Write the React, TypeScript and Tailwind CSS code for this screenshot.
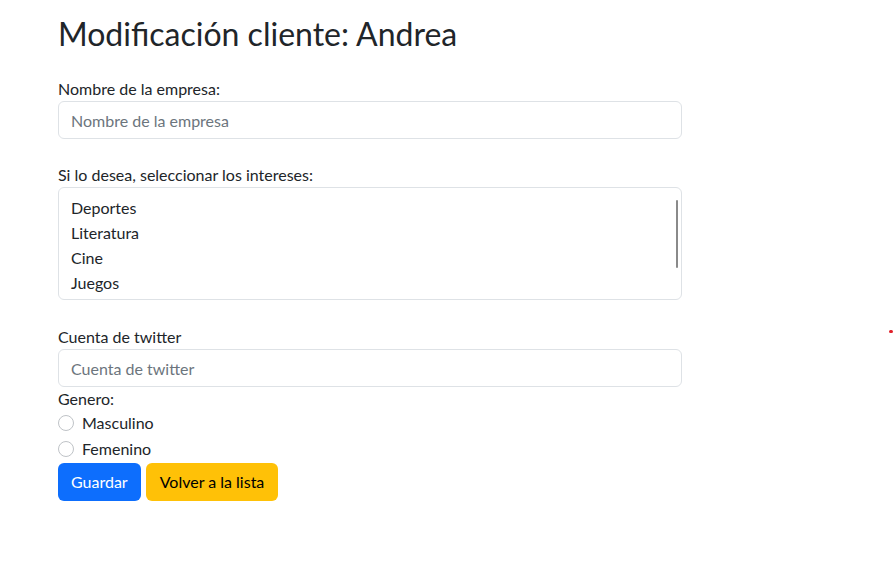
const intereses = ["Deportes", "Literatura", "Cine", "Juegos"];

const inputClass =
  "block w-full h-[38px] rounded-[6px] border border-[#dee2e6] bg-white px-3 text-[16px] text-[#212529] placeholder:text-[#6c757d] outline-none";

export default function App() {
  return (
    <div className="relative min-h-[580px] bg-white font-['Lato',sans-serif] text-[16px] leading-6 text-[#212529]">
      <div className="w-[624px] ml-[58px] pt-[15px]">
        <h1 className="text-[32px] leading-[38px] font-normal mb-[24px]">Modificación cliente: Andrea</h1>

        <label className="block">Nombre de la empresa:</label>
        <input className={inputClass} placeholder="Nombre de la empresa" />

        <label className="block mt-[24px]">Si lo desea, seleccionar los intereses:</label>
        <div className="relative h-[113px] rounded-[6px] border border-[#dee2e6] bg-white px-3 pt-[7px]">
          {intereses.map((i) => (
            <div key={i} className="h-[25px] leading-[25px]">
              {i}
            </div>
          ))}
          <div className="absolute right-[3px] top-[12px] h-[68px] w-[2px] rounded bg-[#8a8a8a]" />
        </div>

        <label className="block mt-[25px]">Cuenta de twitter</label>
        <input className={inputClass} placeholder="Cuenta de twitter" />

        <label className="block">Genero:</label>
        {["Masculino", "Femenino"].map((g) => (
          <label key={g} className="flex items-center h-6 mb-[2px]">
            <span className="w-4 h-4 rounded-full border border-[#bfc3c7] bg-white mr-2" />
            <span>{g}</span>
          </label>
        ))}

        <div className="flex gap-[5px]">
          <button className="h-[38px] px-[13px] rounded-[6px] bg-[#0d6efd] text-white">Guardar</button>
          <button className="h-[38px] px-[14px] rounded-[6px] bg-[#ffc107] text-black">Volver a la lista</button>
        </div>
      </div>
      <div className="absolute left-[889px] top-[330px] w-[4px] h-[3px] rounded-full bg-[#e0202a]" />
    </div>
  );
}
